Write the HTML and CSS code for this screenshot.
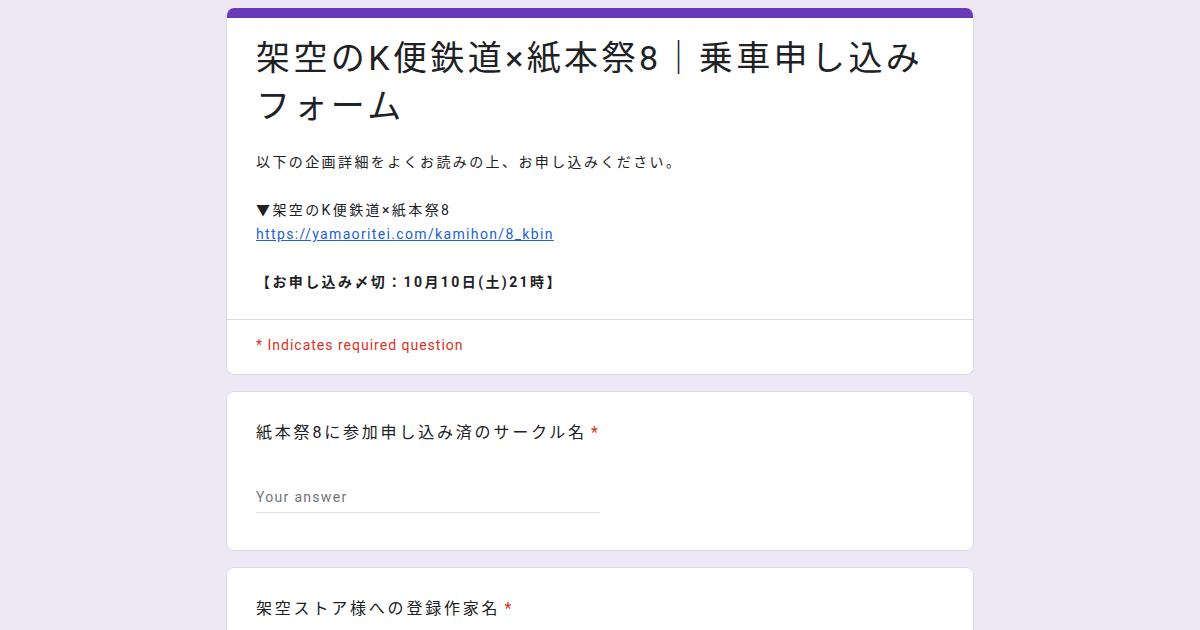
FILE: index.html
```html
<!DOCTYPE html>
<html lang="ja">
<head>
<meta charset="utf-8">
<title>架空のK便鉄道×紙本祭8｜乗車申し込みフォーム</title>
<link rel="stylesheet" href="styles.css">
</head>
<body>
<main class="form">
  <section class="card header-card">
    <div class="accent"></div>
    <div class="header-body">
      <h1 class="title">架空のK便鉄道×紙本祭8｜乗車申し込みフォーム</h1>
      <div class="desc">
        <div class="line jp">以下の企画詳細をよくお読みの上、お申し込みください。</div>
        <div class="line blank"></div>
        <div class="line jp">▼架空のK便鉄道×紙本祭8</div>
        <div class="line"><a class="link" href="#">https://yamaoritei.com/kamihon/8_kbin</a></div>
        <div class="line blank"></div>
        <div class="line jp bold">【お申し込み〆切：10月10日(土)21時】</div>
      </div>
    </div>
    <div class="required-note">* Indicates required question</div>
  </section>

  <section class="card question">
    <div class="q-title">紙本祭8に参加申し込み済のサークル名<span class="star">*</span></div>
    <div class="answer">Your answer</div>
  </section>

  <section class="card question">
    <div class="q-title">架空ストア様への登録作家名<span class="star">*</span></div>
    <div class="answer">Your answer</div>
  </section>
</main>
</body>
</html>
```

FILE: styles.css
```css
html, body {
  margin: 0;
  padding: 0;
}
body {
  background: #ede7f6;
  font-family: Roboto, "Noto Sans CJK JP", "Noto Sans", sans-serif;
  color: #202124;
  height: 630px;
  overflow: hidden;
}
.form {
  width: 748px;
  margin: 0 auto;
  padding-top: 8px;
  display: flex;
  flex-direction: column;
  gap: 16px;
}
.card {
  background: #fff;
  border: 1px solid #dadce0;
  border-radius: 8px;
  box-sizing: border-box;
  overflow: hidden;
}
.header-card {
  border-top: none;
}
.accent {
  height: 10px;
  background: #673ab7;
  margin: 0 -1px;
}
.header-body {
  padding: 16px 29px 25px;
  border-bottom: 1px solid #dadce0;
}
.title {
  margin: 0;
  font-size: 34px;
  font-weight: 400;
  line-height: 48px;
  letter-spacing: 3.4px;
  color: #202124;
}
.desc {
  margin-top: 20px;
  font-size: 14px;
  line-height: 24px;
}
.line {
  height: 24px;
  white-space: nowrap;
}
.jp {
  letter-spacing: 2.4px;
}
.bold {
  font-weight: 700;
}
.link {
  color: #1a62d6;
  text-decoration: underline;
  letter-spacing: 1.35px;
}
.required-note {
  padding: 15px 29px 19px;
  font-size: 14px;
  line-height: 20px;
  color: #d93025;
  letter-spacing: 1px;
}
.question {
  padding: 29px 29px 0;
}
.q-title {
  font-size: 16px;
  line-height: 24px;
  letter-spacing: 2.8px;
  color: #202124;
}
.star {
  color: #d93025;
  margin-left: 4px;
  letter-spacing: 0;
}
.answer {
  margin-top: 42px;
  width: 344px;
  padding-bottom: 5px;
  font-size: 14px;
  line-height: 20px;
  color: #70757a;
  letter-spacing: 1.3px;
  border-bottom: 1px solid #e0e0e0;
  margin-bottom: 37px;
}
```
